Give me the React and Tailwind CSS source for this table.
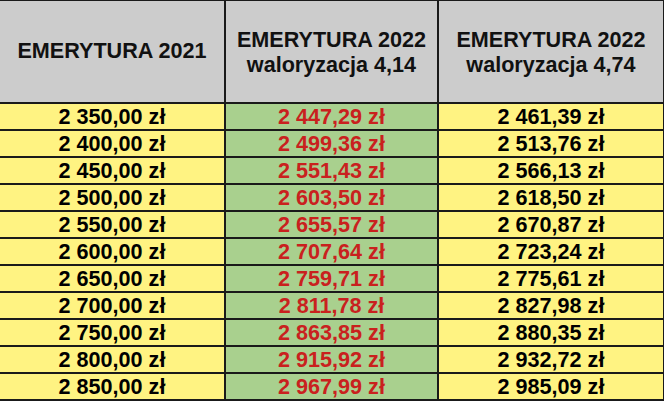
import { Fragment } from 'react';

const rows = [
  ['2 350,00 zł', '2 447,29 zł', '2 461,39 zł'],
  ['2 400,00 zł', '2 499,36 zł', '2 513,76 zł'],
  ['2 450,00 zł', '2 551,43 zł', '2 566,13 zł'],
  ['2 500,00 zł', '2 603,50 zł', '2 618,50 zł'],
  ['2 550,00 zł', '2 655,57 zł', '2 670,87 zł'],
  ['2 600,00 zł', '2 707,64 zł', '2 723,24 zł'],
  ['2 650,00 zł', '2 759,71 zł', '2 775,61 zł'],
  ['2 700,00 zł', '2 811,78 zł', '2 827,98 zł'],
  ['2 750,00 zł', '2 863,85 zł', '2 880,35 zł'],
  ['2 800,00 zł', '2 915,92 zł', '2 932,72 zł'],
  ['2 850,00 zł', '2 967,99 zł', '2 985,09 zł'],
];

export default function App() {
  return (
    <div
      className="w-[664px] h-[401px] bg-[#1a1a1a] pt-[1px] pb-[2px] pr-[1px] grid grid-cols-[224px_211px_1fr] grid-rows-[101px_repeat(11,25px)] gap-[2px] text-[21.6px] font-bold text-black"
      style={{ fontFamily: '"Liberation Sans", Arial, sans-serif' }}
    >
      {/* naglowek */}
      <div className="bg-[#cccccc] flex items-center justify-center text-[#111]">EMERYTURA 2021</div>
      <div className="bg-[#cccccc] flex flex-col items-center justify-center leading-[25px] text-[#111]">
        <span>EMERYTURA 2022</span>
        <span>waloryzacja 4,14</span>
      </div>
      <div className="bg-[#cccccc] flex flex-col items-center justify-center leading-[25px] text-[#111]">
        <span>EMERYTURA 2022</span>
        <span>waloryzacja 4,74</span>
      </div>

      {rows.map((r) => (
        <Fragment key={r[0]}>
          <div className="bg-[#fff382] flex items-center justify-center leading-none">{r[0]}</div>
          <div className="bg-[#a9d08e] flex items-center justify-center leading-none text-[#c9211e]">{r[1]}</div>
          <div className="bg-[#fff382] flex items-center justify-center leading-none">{r[2]}</div>
        </Fragment>
      ))}
    </div>
  );
}
